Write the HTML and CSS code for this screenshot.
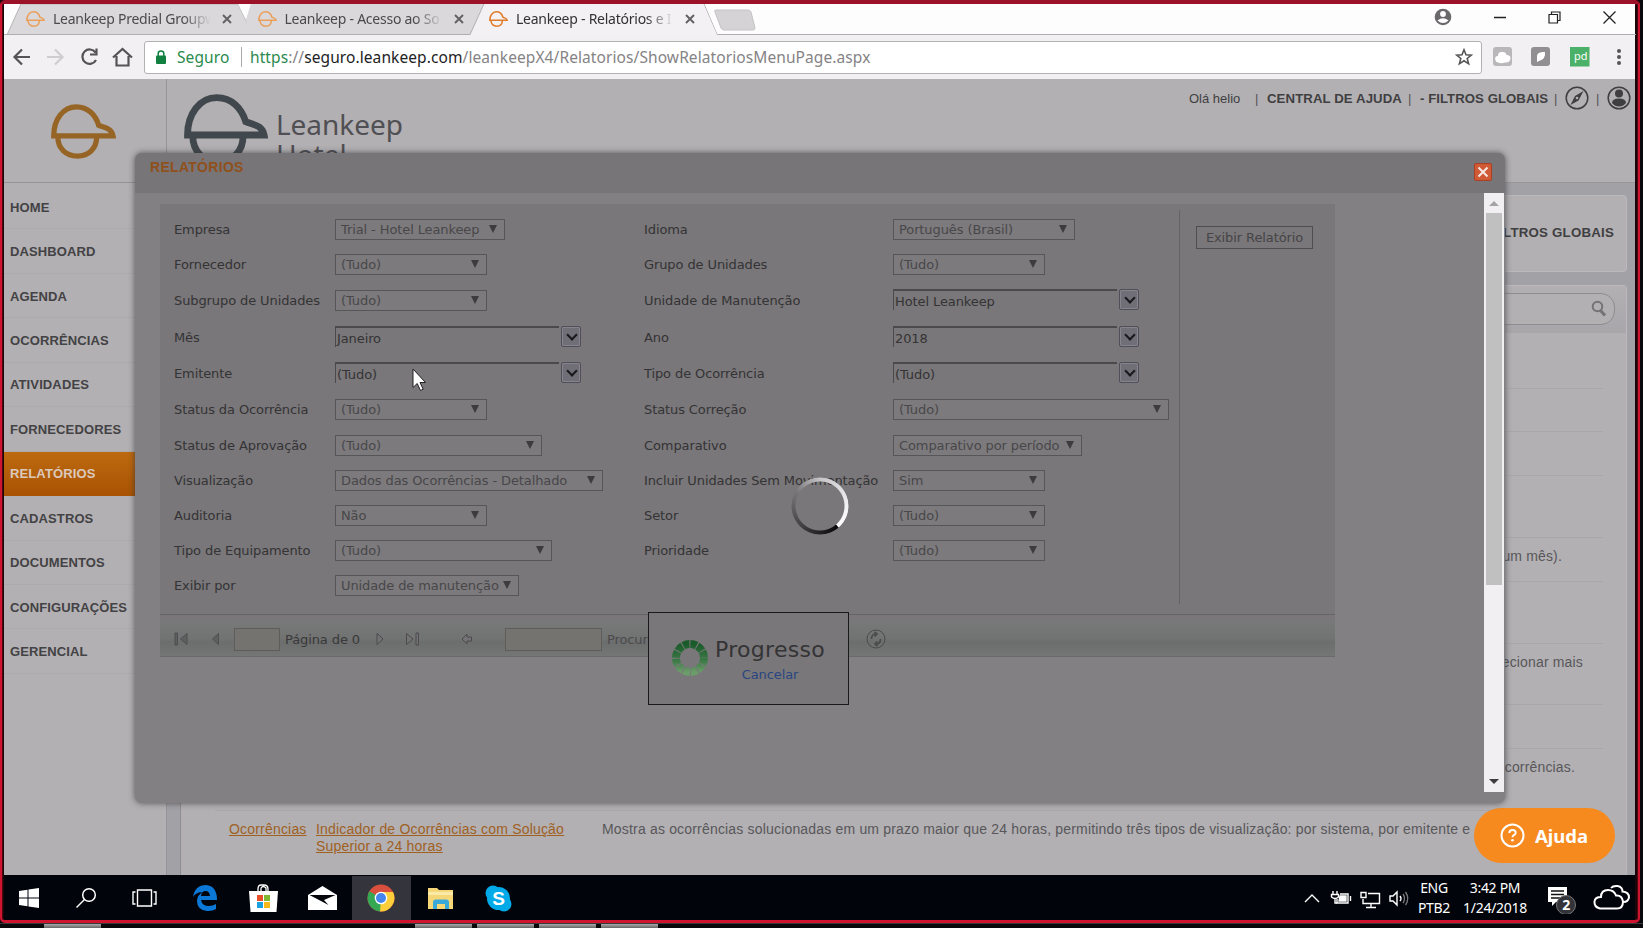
FILE: index.html
```html
<!DOCTYPE html>
<html lang="pt-BR">
<head>
<meta charset="utf-8">
<title>Leankeep - Relatórios</title>
<link rel="stylesheet" href="styles.css">
</head>
<body>
<svg class="defs" width="0" height="0">
  <symbol id="cap" viewBox="0 0 64 54">
    <path d="M2.700 31.200C2.700 15 12 2.700 25 2.700C36.500 2.700 44 11 47 21C53 23.500 59.500 23.500 61 31.200Z" fill="none" stroke="currentColor" stroke-width="5.200"/>
    <path d="M6.700 32C6.700 44 15 51.300 26 51.300C37 51.300 45 44 45 32" fill="none" stroke="currentColor" stroke-width="5.200"/>
  </symbol>
  <symbol id="x" viewBox="0 0 10 10"><path d="M1 1L9 9M9 1L1 9" stroke="currentColor" stroke-width="1.900"/></symbol>
</svg>
<div class="screen">
  <header class="tabstrip">
    <svg class="tabshapes" width="1632" height="31" viewBox="4 4 1632 31">
      <path d="M484 4V35H246L238 4Z" fill="#dad8da"/>
      <path d="M7 35L21 4H238L253 35Z" fill="#dad8da" stroke="#b5b3b5"/>
      <path d="M238 4H251L246 20Z" fill="#fefdfe"/>
      <path d="M248 35L246 20L251 4H480L470 35Z" fill="#dad8da"/>
      <path d="M4 34.500H470L484 4H704L717 34.500H1636" fill="none" stroke="#b0aeb0"/>
      <path d="M470.500 35L484.500 4H703.500L717 35Z" fill="#f3f1f3"/>
      <path d="M716 10H748Q750 10 751 12L755 28Q755 30 753 30H724Q722 30 721 28L715 12Q714 10 716 10Z" fill="#d6d3d6" stroke="#c4c2c4"/>
    </svg>
    <div class="tab"><svg class="fav"><use href="#cap"/></svg><span class="tt">Leankeep Predial Groupw</span><svg class="cl"><use href="#x"/></svg></div>
    <div class="tab"><svg class="fav"><use href="#cap"/></svg><span class="tt">Leankeep - Acesso ao So</span><svg class="cl"><use href="#x"/></svg></div>
    <div class="tab on"><svg class="fav"><use href="#cap"/></svg><span class="tt">Leankeep - Relatórios e I</span><svg class="cl"><use href="#x"/></svg></div>
    <div class="winbtns">
      <svg width="18" height="18" viewBox="0 0 18 18"><circle cx="9" cy="9" r="8.300" fill="#6a686a"/><circle cx="9" cy="6" r="2.900" fill="#fff"/><path d="M3.500 12.500Q9 8 14.500 12.500Q9 17.500 3.500 12.500Z" fill="#fff"/></svg>
      <svg width="12" height="12" viewBox="0 0 12 12"><path d="M0 6.500H12" stroke="#222" stroke-width="1.300"/></svg>
      <svg width="13" height="13" viewBox="0 0 13 13" fill="none" stroke="#222" stroke-width="1.200"><path d="M1 3.500H9.500V12H1ZM3.500 3.500V1H12V9.500H9.500"/></svg>
      <svg width="13" height="13" viewBox="0 0 13 13"><path d="M.5 .5L12.500 12.500M12.500 .5L.5 12.500" stroke="#222" stroke-width="1.300"/></svg>
    </div>
  </header>
  <div class="toolbar">
    <svg width="132" height="24" viewBox="0 0 132 24" fill="none" stroke="#555355" stroke-width="2.200">
      <path d="M26 12H11M18 4.500L10.500 12L18 19.500"/>
      <path stroke="#cfcdcf" d="M43 12H58M51 4.500L58.500 12L51 19.500"/>
      <path d="M91.500 7.500A7.200 7.200 0 1 0 92 15M92.500 3.500V9.500H86"/>
      <path d="M109 12.500L118.500 4L128 12.500M112.500 11V20.500H124.500V11"/>
    </svg>
    <div class="omni">
      <svg width="10" height="14" viewBox="0 0 10 14"><rect y="5.500" width="10" height="8.500" rx="1" fill="#118040"/><path d="M2.200 6V3.500Q2.200 1 5 1T7.800 3.500V6" fill="none" stroke="#118040" stroke-width="1.500"/></svg>
      <span class="sec">Seguro</span><i class="bar"></i>
      <span class="url"><b>https</b>://<em>seguro.leankeep.com</em>/leankeepX4/Relatorios/ShowRelatoriosMenuPage.aspx</span>
      <svg class="star" width="18" height="18" viewBox="0 0 18 18"><path d="M9 1.800L11 6.800L16.300 7.100L12.200 10.500L13.600 15.800L9 12.800L4.400 15.800L5.800 10.500L1.700 7.100L7 6.800Z" fill="none" stroke="#555" stroke-width="1.600"/></svg>
    </div>
    <svg class="ext" width="150" height="24" viewBox="0 0 150 24">
      <rect x="8" y="2" width="19" height="19" rx="3" fill="#b9b7b9"/><path d="M10.500 15.500Q9 11 13 11Q13 6.500 17 7Q21 6.500 21.500 10Q26 10 25.500 14Q24.500 18 20 17.500Q16 19 13 17.500Q11 17.500 10.500 15.500Z" fill="#fff"/>
      <rect x="46" y="2" width="19" height="19" rx="3" fill="#918f91"/><path d="M52 13Q51 6 60 7Q61 14 54 16L52 17Z" fill="#fff"/>
      <rect x="85" y="2" width="19.500" height="19.500" fill="#4bb068"/>
      <text x="89" y="14.500" class="pd">pd</text>
      <g fill="#555"><circle cx="134" cy="6" r="2"/><circle cx="134" cy="12" r="2"/><circle cx="134" cy="18" r="2"/></g>
    </svg>
  </div>

  <main class="page">
    <div class="side">
      <div class="mark"><svg><use href="#cap"/></svg></div>
      <nav>
        <a>HOME</a><a>DASHBOARD</a><a>AGENDA</a><a>OCORRÊNCIAS</a><a>ATIVIDADES</a><a>FORNECEDORES</a><a class="sel">RELATÓRIOS</a><a>CADASTROS</a><a>DOCUMENTOS</a><a>CONFIGURAÇÕES</a><a>GERENCIAL</a>
      </nav>
    </div>
    <div class="right">
      <div class="head">
        <svg class="biglogo"><use href="#cap"/></svg>
        <div class="brand">Leankeep<br>Hotel</div>
        <div class="links">
          <span class="hi">Olá helio</span><i>|</i><b class="ca">CENTRAL DE AJUDA</b><i>|</i><b class="fg">- FILTROS GLOBAIS</b><i>|</i>
          <svg width="24" height="24" viewBox="0 0 24 24"><circle cx="12" cy="12" r="10.800" fill="none" stroke="#3f3e40" stroke-width="1.500"/><path d="M18.500 5L13.500 14.500L5.500 19L10 10Z" fill="#3f3e40"/><circle cx="12" cy="12" r="1.300" fill="#b2b0b3"/></svg>
          <i>|</i>
          <svg width="24" height="24" viewBox="0 0 24 24"><circle cx="12" cy="12" r="10.800" fill="none" stroke="#3f3e40" stroke-width="1.500"/><circle cx="12" cy="7.500" r="4" fill="#3f3e40"/><path d="M5 17Q5 12.500 12 12.500T19 17Q16 20.500 12 20.500T5 17Z" fill="#3f3e40"/></svg>
        </div>
      </div>
      <div class="work">
        <div class="card filt">- FILTROS GLOBAIS</div>
        <div class="card list">
          <div class="searchbar"><div class="search"><svg width="16" height="18" viewBox="0 0 16 18" fill="none" stroke="#747275"><circle cx="6.500" cy="6.500" r="4.800" stroke-width="2"/><path d="M9.500 10.500L14 15.500" stroke-width="3"/></svg></div></div>
          <div class="rows">
            <div class="r h56"></div><div class="r h43"></div><div class="r h44"></div><div class="r h62"></div>
            <div class="r h44"><span class="tail p39">um mês).</span></div>
            <div class="r h62"></div>
            <div class="r h61"><span class="tail p18">ecionar mais</span></div>
            <div class="r h44"></div>
            <div class="r h62"><span class="tail p26">corrências.</span></div>
            <div class="r last"><a>Ocorrências</a><a>Indicador de Ocorrências com Solução<br>Superior a 24 horas</a><p>Mostra as ocorrências solucionadas em um prazo maior que 24 horas, permitindo três tipos de visualização: por sistema, por emitente e</p></div>
          </div>
        </div>
      </div>
    </div>

    <div class="help"><svg width="25" height="25" viewBox="0 0 25 25"><circle cx="12.500" cy="12.500" r="11" fill="none" stroke="#fff" stroke-width="2"/><path d="M9.300 10Q9.300 7 12.500 7T15.700 9.700Q15.700 11.300 13.800 12.200Q12.500 12.900 12.500 14.300" fill="none" stroke="#fff" stroke-width="1.900"/><circle cx="12.500" cy="17.300" r="1.300" fill="#fff"/></svg><span>Ajuda</span></div>

    <section class="modal">
      <div class="mhead"><span>RELATÓRIOS</span><svg width="18" height="18" viewBox="0 0 18 18"><rect x=".5" y=".5" width="17" height="17" rx="1.500" fill="#d05a35" stroke="#a84022"/><path d="M4.500 4.500L13.500 13.500M13.500 4.500L4.500 13.500" stroke="#f6e9e4" stroke-width="2"/></svg></div>
      <div class="mbody">
        <div class="report">
          <div class="params">
            <div class="grid">
              <label>Empresa</label><div><span class="s w170">Trial - Hotel Leankeep</span></div><label>Idioma</label><div><span class="s w182">Português (Brasil)</span></div>
              <label>Fornecedor</label><div><span class="s">(Tudo)</span></div><label>Grupo de Unidades</label><div><span class="s">(Tudo)</span></div>
              <label>Subgrupo de Unidades</label><div><span class="s">(Tudo)</span></div><label>Unidade de Manutenção</label><div class="c"><span>Hotel Leankeep</span><i></i></div>
              <label>Mês</label><div class="c"><span>Janeiro</span><i></i></div><label>Ano</label><div class="c"><span>2018</span><i></i></div>
              <label>Emitente</label><div class="c"><span>(Tudo)</span><i></i></div><label>Tipo de Ocorrência</label><div class="c"><span>(Tudo)</span><i></i></div>
              <label>Status da Ocorrência</label><div><span class="s">(Tudo)</span></div><label>Status Correção</label><div><span class="s w276">(Tudo)</span></div>
              <label>Status de Aprovação</label><div><span class="s w207">(Tudo)</span></div><label>Comparativo</label><div><span class="s w189">Comparativo por período</span></div>
              <label>Visualização</label><div><span class="s w268">Dados das Ocorrências - Detalhado</span></div><label>Incluir Unidades Sem Movimentação</label><div><span class="s">Sim</span></div>
              <label>Auditoria</label><div><span class="s">Não</span></div><label>Setor</label><div><span class="s">(Tudo)</span></div>
              <label>Tipo de Equipamento</label><div><span class="s w217">(Tudo)</span></div><label>Prioridade</label><div><span class="s">(Tudo)</span></div>
              <label>Exibir por</label><div><span class="s w184">Unidade de manutenção</span></div>
            </div>
            <div class="act"><span class="btn">Exibir Relatório</span></div>
          </div>
          <div class="rbar">
            <svg width="60" height="14" viewBox="0 0 60 14" fill="#5f5e60" stroke="#4e4d4f"><path d="M1 1H3.500V13H1ZM13 1.500V12.500L6.500 7ZM44.500 1.500V12.500L38.500 7Z"/></svg>
            <span class="in a"></span><span class="pg">Página de 0</span>
            <svg width="100" height="14" viewBox="0 0 100 14" fill="#747274" stroke="#4b4a4c"><path d="M1 1.500V12.500L7 7ZM30.500 1.500V12.500L37 7ZM40 1H42.500V13H40ZM86 7L91 2V5H95.500V9H91V12Z"/></svg>
            <span class="in b"></span><span class="pr">Procurar</span>
            <svg class="ref" width="20" height="20" viewBox="0 0 20 20" fill="none" stroke="#4b4a4c"><circle cx="10" cy="10" r="9"/><path d="M5.500 10Q5.500 5 10 5M8.500 2.800L11 5L8.500 7.500M14.500 10Q14.500 15 10 15M11.500 12.500L9 15L11.500 17.200" stroke-width="1.700"/></svg>
          </div>
        </div>
        <div class="scroll"><b class="up"></b><i></i><b class="dn"></b></div>
      </div>
    </section>

    <div class="prog">
      <svg width="38" height="38" viewBox="-19 -19 38 38"><circle r="14" fill="none" stroke="url(#g)" stroke-width="8" stroke-dasharray="6.330 1"/>
        <defs><linearGradient id="g" x1="0" y1="0" x2="0" y2="1"><stop offset="0" stop-color="#1b5a2a"/><stop offset=".6" stop-color="#3c7a48"/><stop offset="1" stop-color="#6c9c6a"/></linearGradient></defs></svg>
      <div><strong>Progresso</strong><a>Cancelar</a></div>
    </div>
    <div class="spin"></div>
    <svg class="cursor" width="16" height="25" viewBox="0 0 16 25"><path d="M1 1V19.500L5.200 15.500L8.500 22.500L11.200 21.200L8 14.500H13.500Z" fill="#fff" stroke="#222"/></svg>
  </main>

  <footer class="taskbar">
    <div class="ti"><svg width="20" height="20" viewBox="0 0 20 20" fill="#fff"><path d="M0 3L8.500 1.800V9.500H0ZM9.500 1.600L20 0V9.500H9.500ZM0 10.500H8.500V18.200L0 17ZM9.500 10.500H20V20L9.500 18.400Z"/></svg></div>
    <div class="ti"><svg width="22" height="22" viewBox="0 0 22 22" fill="none" stroke="#fff" stroke-width="1.500"><circle cx="14" cy="8" r="6.300"/><path d="M9.500 12.500L1.500 20.500"/></svg></div>
    <div class="ti"><svg width="25" height="20" viewBox="0 0 25 20" fill="none" stroke="#fff" stroke-width="1.400"><path d="M5.500 2H19.500V18H5.500ZM3.500 4H1V16H3.500M21.500 4H24V16H21.500"/></svg></div>
    <div class="ti"><svg width="26" height="28" viewBox="0 0 26 28"><path d="M1 13Q3 1 14 1Q25 2 25 16H9Q10 22 17 22Q21 22 24 20V25Q20 27.500 15 27Q5 26 5 17Q5 11 11 8Q4 8 1 13ZM9 12H18Q17.500 7 13.500 7T9 12Z" fill="#0b78d7" fill-rule="evenodd"/></svg></div>
    <div class="ti"><svg width="29" height="28" viewBox="0 0 29 28"><path d="M9 8V5Q9 1 12 1T15 1Q19 1 19 5V8M12 7V4Q14 1 17 4V7" fill="none" stroke="#fff" stroke-width="1.300"/><path d="M0 7H29L27.500 28H1.500Z" fill="#fff"/><path d="M8 11H14V17H8Z" fill="#e8502a"/><path d="M15 11H21V17H15Z" fill="#7fb92f"/><path d="M8 18H14V24H8Z" fill="#1ba0e0"/><path d="M15 18H21V24H15Z" fill="#f8b819"/></svg></div>
    <div class="ti"><svg width="29" height="24" viewBox="0 0 29 24"><path d="M0 9L14.500 0L29 9V24H0Z" fill="#fff"/><path d="M1.500 9H27.500L16 14L20.500 19Z" fill="#05060c"/></svg></div>
    <div class="ti act"><svg width="28" height="28" viewBox="0 0 28 28"><circle cx="14" cy="14" r="13.500" fill="#d94f3d"/><path d="M14 14L2.300 7.200A13.500 13.500 0 0 0 13 27.500L19.500 17Z" fill="#35a853"/><path d="M14 14L13 27.500A13.500 13.500 0 0 0 26 8H14Z" fill="#fbce3a"/><circle cx="14" cy="14" r="6.300" fill="#fff"/><circle cx="14" cy="14" r="5" fill="#4585ee"/></svg></div>
    <div class="ti"><svg width="27" height="23" viewBox="0 0 27 23"><path d="M1 1H10L12 3H26V22H1Z" fill="#f5d778"/><path d="M1 5H26V8H1Z" fill="#fbe9a8"/><path d="M6 22V15Q6 12.500 9 12.500H19Q22 12.500 22 15V22H18V17H10V22Z" fill="#38a9d8"/></svg></div>
    <div class="ti"><svg width="27" height="27" viewBox="0 0 27 27"><circle cx="13.500" cy="13.500" r="11.500" fill="#00a9e8"/><circle cx="8" cy="8" r="7.500" fill="#00a9e8"/><circle cx="19" cy="19" r="7.500" fill="#00a9e8"/><text x="13.500" y="20" text-anchor="middle" class="sk">S</text></svg></div>
    <div class="tray">
      <svg width="110" height="22" viewBox="1302 888 110 22" fill="none" stroke="#fff" stroke-width="1.400">
        <path d="M1305 903L1312 896L1319 903"/>
        <path d="M1333 892V895M1337 892V895M1331.500 895.500H1338.500V898Q1335 901 1331.500 898ZM1335 900V904H1337"/><path d="M1340 895H1348V904H1337V900"/><path d="M1350.500 897V902"/><path d="M1340 897H1346V902H1339Z" fill="#fff"/>
        <path d="M1368 894.500H1379.500V904.500H1363V900M1371 905V908M1366 908.500H1376M1361 893.500H1366V898.500H1361Z"/>
        <path d="M1390 897H1393L1397 893V906L1393 902H1390Z"/><path d="M1400 897Q1402 899.500 1400 902"/><path stroke="#777" d="M1403 895Q1406 899.500 1403 904M1405.500 893Q1410 899.500 1405.500 906"/>
      </svg>
      <div class="lang">ENG<br>PTB2</div><div class="clock">3:42 PM<br>1/24/2018</div>
      <svg width="90" height="32" viewBox="1545 884 90 32"><path d="M1548 889H1567V904H1556L1552 908V904H1548Z" fill="#fff"/><path d="M1551 893H1564M1551 896.500H1564M1551 900H1560" stroke="#111" stroke-width="1.300"/><circle cx="1566" cy="907" r="9.500" fill="#33343a" stroke="#777"/><text x="1566" y="912" text-anchor="middle" class="nt">2</text>
        <path d="M1600 910.500Q1594 909 1594.500 903.500Q1595 899 1601 899Q1601 892 1608 892Q1614 892 1616 897.500Q1622 897 1623 903.500Q1623 910.500 1617 910.500ZM1611 890Q1613 887.500 1617.500 888Q1622.500 889 1622.500 893.500Q1629 894 1629 899.500Q1628 904 1623.500 904" fill="none" stroke="#fff" stroke-width="2"/></svg>
    </div>
  </footer>
</div>
<div class="strip"><i></i><i></i><i></i><i></i><i></i></div>
</body>
</html>
```
FILE: styles.css
```css
* { box-sizing: border-box; }
body { margin: 0; width: 1643px; height: 928px; overflow: hidden; background: #09080b; font-family: "Liberation Sans", sans-serif; }
.defs { position: absolute; }
svg { flex: none; display: block; }
.screen { width: 1640px; height: 923px; border: 2px solid #cf1430; border-top: 4px solid #9c1228; border-bottom-width: 3px; border-radius: 5px; padding: 0 3px 0 2px; background: #1a0508; box-shadow: inset 0 0 0 1px #4a0812; overflow: hidden; }

.tabstrip { position: relative; height: 31px; background: #fefdfe; display: flex; font: 14px "Noto Sans", sans-serif; letter-spacing: -.25px; color: #4b494c; }
.tabshapes { position: absolute; left: 0; top: 0; }
.tab { position: relative; width: 231.5px; padding-left: 22px; display: flex; align-items: center; height: 29px; }
.tab .fav { width: 19px; height: 16px; color: #e9a05d; margin-right: 8px; }
.tab.on .fav { color: #e07b2a; }
.tt { width: 158px; white-space: nowrap; -webkit-mask-image: linear-gradient(90deg, #000 82%, transparent); mask-image: linear-gradient(90deg, #000 82%, transparent); }
.on { color: #333; }
.tab .cl { width: 10px; height: 10px; margin-left: 11px; color: #626062; }
.winbtns { margin-left: auto; display: flex; align-items: center; gap: 42px; padding-right: 19px; height: 26px; position: relative; }

.toolbar { height: 44px; background: #f2f0f2; display: flex; align-items: center; }
.toolbar > svg:first-child { margin-right: 8px; }
.omni { width: 1338px; height: 33px; background: #fff; border: 1px solid #b3b1b3; border-radius: 3px; display: flex; align-items: center; padding-left: 11px; font: 15.5px "Noto Sans", sans-serif; color: #858385; white-space: nowrap; }
.ext { margin-left: 3px; }
.sec { color: #2b8a4d; margin-left: 11px; width: 52px; letter-spacing: .1px; }
.bar { width: 1px; height: 20px; background: #aaa; margin: 0 8px 0 12px; }
.url { letter-spacing: .09px; }
.url b { font-weight: 400; color: #2b8a4d; }
.url em { font-style: normal; color: #222; }
.star { margin-left: auto; margin-right: 8px; }
.pd { font: 11px "Noto Sans", sans-serif; fill: #fff; }

.page { position: relative; height: 796px; background: #b2b0b3; display: flex; overflow: hidden; }
.side { width: 163px; border-right: 1px solid #96949a; }
.mark { height: 104px; border-bottom: 1px solid #959397; padding: 25px 0 0 47px; color: #966526; }
.mark svg { width: 65px; height: 55px; }
nav { padding-top: 2px; }
nav a { display: flex; align-items: center; height: 44.45px; padding-left: 6px; font-weight: bold; font-size: 13px; letter-spacing: .12px; color: #434244; border-bottom: 1px solid #acaaad; }
nav a:not(.sel) { padding-top: 1px; }
nav .sel { background: linear-gradient(#bd6a10, #a95203); color: #dcc9bd; border: 0; }
.right { flex: 1; display: flex; flex-direction: column; }
.head { flex: none; height: 104px; display: flex; border-bottom: 1px solid #98969b; padding-left: 17px; }
.biglogo { width: 84px; height: 71px; margin-top: 15px; color: #41484d; }
.brand { margin: 25px 0 0 8px; font: 28px "Noto Sans", sans-serif; line-height: 30px; padding-top: 5px; letter-spacing: -.05px; color: #504f53; }
.links { margin-left: auto; display: flex; align-items: center; height: 38px; font-size: 14px; color: #403f41; padding-right: 4px; white-space: nowrap; }
.links i { font-style: normal; font-size: 13px; color: #565457; width: 4px; margin: 0 7px; }
.links .hi { font-size: 13px; width: 52px; margin-right: 7px; }
.links b { font-size: 13.200px; letter-spacing: .1px; }
.ca { width: 135px; padding-left: 1px; }
.links .fg { width: 128px; padding-left: 1px; letter-spacing: .05px; }
.work { flex: 1; background: #a2a1a6; padding: 12px 8px 0 13px; }
.card { background: #b2b0b3; border: 1px solid #bbb9bc; border-radius: 4px; }
.filt { height: 77px; text-align: right; padding: 29px 12px; font-weight: bold; font-size: 13.300px; letter-spacing: .2px; color: #403f41; margin-bottom: 13px; }
.list { height: 620px; border-left-color: #8f8d92; }
.searchbar { height: 47px; background: linear-gradient(#b2b0b3, #a8a6aa); padding: 7px 11px; }
.search { height: 32px; border: 1px solid #8f8d90; border-radius: 14px; background: #b2b0b3; display: flex; justify-content: flex-end; align-items: center; padding-right: 7px; }
.rows { padding: 0 23px 0 34px; font-size: 14px; letter-spacing: .16px; color: #58575a; }
.r { border-bottom: 1px solid #a9a7aa; padding-top: 10px; text-align: right; line-height: 17px; }
.h43 { height: 43px; } .h44 { height: 44px; } .h56 { height: 56px; } .h61 { height: 61px; } .h62 { height: 62px; }
.p39 { margin-right: 41px; } .p18 { margin-right: 20px; } .p26 { margin-right: 28px; }
.r.last { display: grid; grid-template-columns: 87px 286px auto; border: 0; text-align: left; padding: 10px 0 0 14px; white-space: nowrap; }
.r p { margin: 0; letter-spacing: .18px; }
.last a { color: #a0601f; text-decoration: underline; letter-spacing: .19px; }

.help { position: absolute; left: 1470px; top: 729px; width: 141px; height: 55px; border-radius: 28px; background: #f68a1f; display: flex; align-items: center; gap: 10px; padding-left: 26px; color: #fff; font: bold 18.500px "Noto Sans", sans-serif; }

.modal { position: absolute; left: 131px; top: 74px; width: 1370px; height: 650px; border-radius: 7px; background: #828082; box-shadow: 0 0 6px rgba(50,50,55,.75); color: #343335; font: 13px "DejaVu Sans", sans-serif; letter-spacing: -.1px; display: flex; flex-direction: column; overflow: hidden; }
.mhead { height: 40px; background: #777577; display: flex; justify-content: space-between; padding: 6px 13px 0 15px; font: bold 14px "Liberation Sans", sans-serif; letter-spacing: .3px; color: #90501b; }
.mhead svg { margin-top: 4px; }
.mbody { flex: 1; display: flex; justify-content: space-between; padding: 0 1px 11px 25px; }
.report { margin-top: 11px; width: 1175px; }
.params { height: 411px; background: #797779; border-bottom: 1px solid #666466; display: flex; }
.grid { width: 1020px; height: 394px; margin-top: 6px; border-right: 1px solid #646265; padding: 1.500px 0 0 14px; display: grid; grid-template-columns: 161px 309px 249px 285px; grid-template-rows: 35px 35.5px 36.5px 37px 36.5px 35.500px 35px 35px 35px 35px 35px; align-items: center; white-space: nowrap; }
.s { position: relative; display: block; width: 152px; height: 21px; border: 1px solid #565557; background: #7c7a7c; line-height: 20px; padding-left: 5px; color: #48474a; }
.s::after { content: ""; position: absolute; right: 7px; top: 5px; border: 4px solid transparent; border-top: 8px solid #3c3b3d; border-bottom: 0; }
.w170 { width: 170px; } .w182 { width: 182px; } .w207 { width: 207px; } .w268 { width: 268px; } .w217 { width: 217px; } .w184 { width: 184px; } .w276 { width: 276px; } .w189 { width: 189px; }
.c { display: flex; gap: 2px; align-items: center; margin-top: -2px; }
.c span { width: 224px; height: 21px; border-top: 2px solid #4a494b; border-left: 1px solid #4a494b; line-height: 21px; padding-left: 1px; }
.c i { position: relative; width: 20px; height: 21px; border: 1px solid #4f4e59; border-radius: 2px; background: #706e76; box-shadow: inset 0 0 0 1px #85838c; }
.c i::after { content: ""; position: absolute; left: 6px; top: 4px; width: 6px; height: 6px; border: solid #19191d; border-width: 0 2.5px 2.5px 0; transform: rotate(45deg); }
.params .act { padding: 22px 0 0 16px; }
.btn { display: block; width: 117px; height: 23px; border: 1px solid #4e4d4f; line-height: 21px; text-align: center; color: #454447; white-space: nowrap; }
.rbar { height: 42px; padding: 0 0 0 14px; border-top: 7px solid #797779; border-bottom: 1px solid #6a696b; background: linear-gradient(#777978, #717272 50%, #6c6d6d 58%, #747575); display: flex; align-items: center; color: #39383a; white-space: nowrap; }
.in { border: 1px solid #5f5d5a; background: #757370; height: 23px; }
.in.a { width: 46px; margin-right: 5px; }
.pg { width: 91px; }
.in.b { width: 97px; margin: 0 5px 0 29px; }
.pr { width: 259px; color: #4b4a4c; }
.scroll { width: 20px; background: #f1eff1; padding: 0 2px; display: flex; flex-direction: column; align-items: center; }
.scroll i { width: 16px; height: 372px; background: #c1c0c1; }
.up { border: 5px solid transparent; border-bottom-color: #a5a3a6; border-top: 0; margin: 8px 0 7px; }
.dn { border: 5px solid transparent; border-top-color: #3d3c3e; border-bottom: 0; margin: auto 0 8px; }

.prog { position: absolute; left: 644px; top: 533px; width: 201px; height: 93px; border: 1.5px solid #19191b; background: #797779; display: flex; align-items: center; padding-left: 22px; gap: 6px; font: 13px "DejaVu Sans", sans-serif; }
.prog div { display: flex; flex-direction: column; align-items: center; gap: 1px; padding-top: 3px; }
.prog svg { margin-top: -1px; }
.prog strong { font-weight: 400; font-size: 22px; line-height: 28px; color: #343335; letter-spacing: .3px; }
.prog a { color: #29467f; line-height: 20px; letter-spacing: -.1px; }
.spin { position: absolute; left: 787px; top: 398px; width: 58px; height: 58px; border-radius: 50%; background: conic-gradient(#c5c4c6 0, #f2f1f3 90deg, #fff 138deg, #09090a 140deg, #222 180deg, #555456 250deg, #777577 300deg, #c5c4c6 360deg); -webkit-mask: radial-gradient(circle, transparent 24px, #000 25px, #000 28px, transparent 29px); mask: radial-gradient(circle, transparent 24px, #000 25px, #000 28px, transparent 29px); }
.cursor { position: absolute; left: 408px; top: 289px; }

.taskbar { height: 45px; background: #02040b; display: flex; color: #fff; padding-top: 1px; }
.ti { width: 58.7px; display: flex; align-items: center; justify-content: center; }
.ti:first-child { width: 50px; margin-right: 3px; }
.ti:nth-child(3) { width: 57px; margin-right: 3px; }
.ti.act { background: #34353c; width: 59px; }
.sk { font: bold 19px "Liberation Sans", sans-serif; fill: #fff; }
.tray { margin-left: auto; display: flex; align-items: center; font: 14px/20px "Noto Sans", sans-serif; letter-spacing: -.3px; text-align: center; white-space: nowrap; }
.lang { width: 44px; } .clock { width: 78px; margin-right: 11px; }
.nt { font: bold 14px "Noto Sans", sans-serif; fill: #fff; }
.strip { height: 5px; padding-left: 44px; display: flex; gap: 5px; border-top: 1px solid #3a383b; }
.strip i { width: 57px; background: linear-gradient(#aaa, #666); }
.strip i:first-child { margin-right: 309px; }
```
